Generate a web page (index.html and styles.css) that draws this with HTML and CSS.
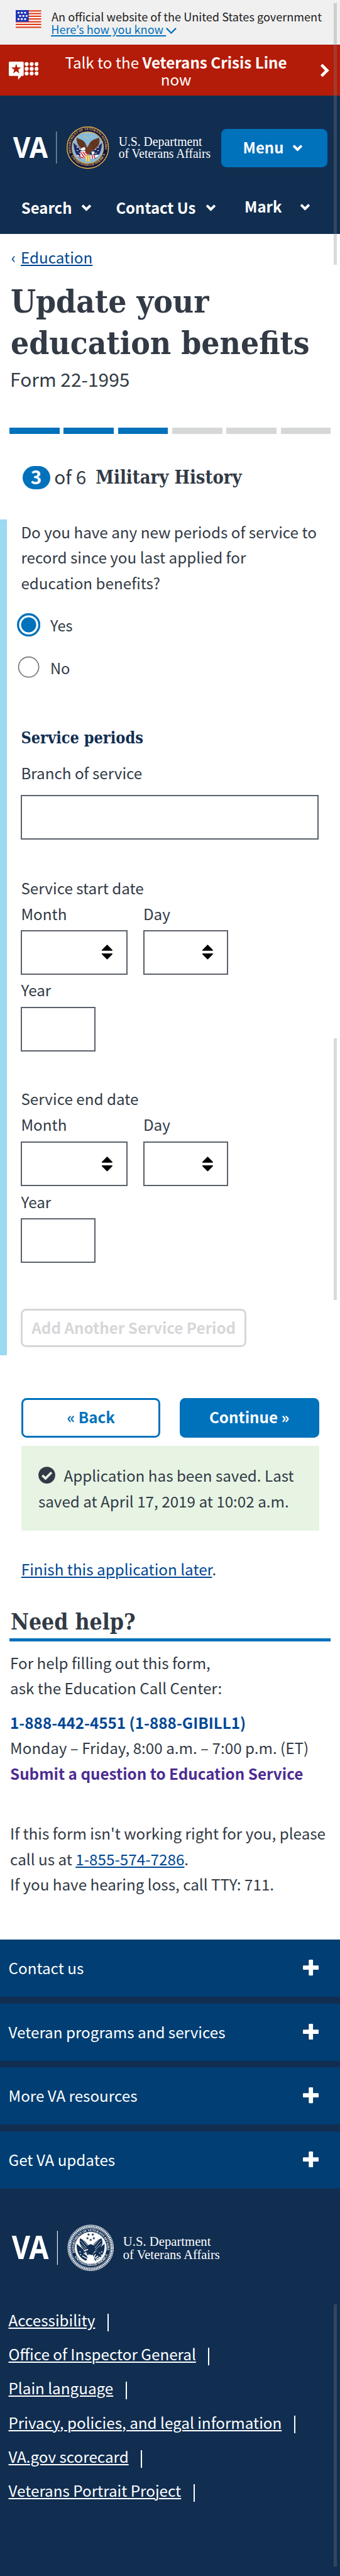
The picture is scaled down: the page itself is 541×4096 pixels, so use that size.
FILE: index.html
```
<!DOCTYPE html>
<html lang="en">
<head>
<meta charset="utf-8">
<title>Update your education benefits</title>
<link rel="stylesheet" href="styles.css">
</head>
<body>
<svg class="defs" aria-hidden="true">
  <symbol id="chev" viewBox="0 0 20 14"><path d="M2.4 3 10 10.6 17.6 3" fill="none" stroke="#fff" stroke-width="4.6"/></symbol>
  <symbol id="plus" viewBox="0 0 30 30"><rect x="11" width="8" height="30" rx="1.5" fill="#fff"/><rect y="11" width="30" height="8" rx="1.5" fill="#fff"/></symbol>
  <symbol id="sort" viewBox="0 0 20 28"><path d="M10 0 20 10V11.5H0V10zM0 16.500H20V18L10 28 0 18z"/></symbol>
  <symbol id="star" viewBox="-10 -10 20 20"><path d="M0-10 2.400-3.200 9.500-3.100 3.800 1.200 5.900 8.100 0 4-5.900 8.100-3.800 1.200-9.500-3.100-2.400-3.200z"/></symbol>
</svg>

<div class="gov">
  <svg class="flag" viewBox="0 0 48 34">
    <rect width="48" height="34" fill="#fff"/>
    <path d="M0 1.500H48M0 6.600H48M0 11.700H48M0 16.800H48M0 21.900H48M0 27H48M0 32.500H48" stroke="#dd4022" stroke-width="2.700"/>
    <rect width="24.500" height="22" fill="#2135b5"/>
    <path d="M3.500 5H20M6.500 11H22M3.500 17H20" stroke="#fff" stroke-width="3.200" stroke-dasharray="3.500 2.700"/>
  </svg>
  <div>An official website of the United States government<br><a>Here’s how you know </a><svg class="gov-chev" viewBox="0 0 20 12"><path d="M1 1 10 10 19 1" fill="none" stroke="#0071bb" stroke-width="2.700"/></svg></div>
</div>

<div class="crisis">
  <svg class="crisis-icon" viewBox="0 0 56 34">
    <path d="M2 0H26Q28 0 28 2V25Q28 27 26 27H24L17.500 34V27H2Q0 27 0 25V2Q0 0 2 0z" fill="#fff"/>
    <use href="#star" x="4" y="4" width="20" height="20" fill="#b31c08"/>
    <g fill="#fff"><circle cx="33.500" cy="4.500" r="3.700"/><circle cx="43" cy="4.500" r="3.700"/><circle cx="52.300" cy="4.500" r="3.700"/><circle cx="33.500" cy="13.500" r="3.700"/><circle cx="43" cy="13.500" r="3.700"/><circle cx="52.300" cy="13.500" r="3.700"/><circle cx="33.500" cy="22.300" r="3.700"/><circle cx="43" cy="22.300" r="3.700"/><circle cx="52.300" cy="22.300" r="3.700"/></g>
  </svg>
  <div class="crisis-text">Talk to the <b>Veterans Crisis Line</b> now</div>
  <svg class="crisis-arrow" viewBox="0 0 18 26"><path d="M3 2.500 13.500 13 3 23.500" fill="none" stroke="#fff" stroke-width="5.600"/></svg>
</div>

<header class="header">
  <div class="header-top">
    <svg class="logo" viewBox="20 236 380 82">
      <text class="va" x="24.500" y="296" textLength="65.500" lengthAdjust="spacingAndGlyphs">VA</text>
      <path d="M106 247V307" stroke="#8a99ad" stroke-width="1.600"/>
      <g transform="translate(165 277)">
        <circle r="40.500" fill="#17143f"/>
        <circle r="39" fill="none" stroke="#e3bb4e" stroke-width="1.700"/>
        <circle r="29.600" fill="#86b9dc" stroke="#d9b356" stroke-width="1.300"/>
        <path id="arcTop" d="M-29.500 13A32.500 32.500 0 1 1 29.500 13" fill="none"/>
        <path id="arcBot" d="M-33 12A35.500 35.500 0 0 0 33 12" fill="none"/>
        <text class="ring gold"><textPath href="#arcTop" startOffset="3" textLength="117">DEPARTMENT OF VETERANS AFFAIRS</textPath></text>
        <text class="ring gold"><textPath href="#arcBot" startOffset="4" textLength="80">UNITED STATES OF AMERICA</textPath></text>
        <path d="M-27-10C-26 6-22 15-14 21L-3 12-12 3zM27-10C26 6 22 15 14 21L3 12 12 3z" fill="#20285f"/>
        <path d="M-21-1l3 1M-21 5l3 1M-16 3l3 1M21-1l-3 1M21 5l-3 1M16 3l-3 1M-17 10l3 1M17 10l-3 1" stroke="#fff" stroke-width="1.200"/>
        <path d="M-28-11-13 4M28-11 13 4" stroke="#eee" stroke-width="1"/>
        <path d="M-21-19C-17-16-9-15-5-9L-1 0 4-9C8-15 16-16 21-19 25-9 20 0 8 6L3 13-4 11C-10 2-22-2-21-19z" fill="#6b3a22"/>
        <path d="M-19-14-7-3M-19-9-8 1M19-14 8-3M20-8 9 1M-14-15-5-6M14-15 6-6" stroke="#3a1c12" stroke-width="1"/>
        <path d="M-12 1-6-1-4 3-8 6-13 5z" fill="#fff"/><path d="M7 8 12 7 13 11 8 14z" fill="#fff"/>
        <path d="M-14 7-5 6 0 17-9 21C-15 19-19 18-21 13L-14 16zM14 14 21 13C19 18 13 21 6 21L5 14z" fill="#fff"/>
        <path d="M-13 9-6 19M-9 8-2 18M-17 16-8 20M8 14 9 21M12 14 13 20M-5 8 0 13" stroke="#cc2431" stroke-width="1.900"/>
        <path d="M-5 15-1 13 5 16 4 26-4 26z" fill="#e3b341"/><path d="M-2 16-3 25M2 16 2 26" stroke="#fff" stroke-width="1"/>
        <g fill="#ecd04f"><use href="#star" x="-5" y="-29" width="4" height="4"/><use href="#star" x="2" y="-29" width="4" height="4"/><use href="#star" x="-7" y="-23" width="4" height="4"/><use href="#star" x="4" y="-23" width="4" height="4"/><use href="#star" x="-2" y="-20" width="4" height="4"/></g>
      </g>
      <text class="dept" x="223" y="273.700" textLength="157" lengthAdjust="spacingAndGlyphs">U.S. Department</text>
      <text class="dept" x="223" y="296" textLength="173" lengthAdjust="spacingAndGlyphs">of Veterans Affairs</text>
    </svg>
    <div class="menu"><span>Menu</span><svg class="chev"><use href="#chev"/></svg></div>
  </div>
  <nav class="nav">
    <div class="n1"><span>Search</span><svg class="chev"><use href="#chev"/></svg></div>
    <div class="n2"><span>Contact Us</span><svg class="chev"><use href="#chev"/></svg></div>
    <div class="n3"><span>Mark</span><svg class="chev"><use href="#chev"/></svg></div>
  </nav>
</header>

<main>
  <div class="crumb"><span>‹</span><a>Education</a></div>
  <h1>Update your<br>education benefits</h1>
  <div class="form-no">Form 22-1995</div>
  <div class="progress"><i class="on"></i><i class="on"></i><i class="on"></i><i></i><i></i><i></i></div>
  <div class="step"><b class="pill">3</b><span class="of">of 6</span><h4>Military History</h4></div>

  <section class="fields">
    <p class="question">Do you have any new periods of service to<br>record since you last applied for<br>education benefits?</p>
    <div class="radio"><svg viewBox="0 0 44 44"><circle cx="22" cy="22" r="20" fill="#fff" stroke="#0071bb" stroke-width="4"/><circle cx="22" cy="22" r="14.200" fill="#0071bb"/></svg><span>Yes</span></div>
    <div class="radio"><svg viewBox="0 0 44 44"><circle cx="22" cy="22" r="19" fill="#fff" stroke="#757575" stroke-width="2"/></svg><span>No</span></div>
    <h5>Service periods</h5>
    <label>Branch of service</label>
    <div class="box branch"></div>

    <div class="date">
      <p>Service start date</p>
      <div class="pair">
        <div><label>Month</label><div class="box month"><svg class="sort"><use href="#sort"/></svg></div></div>
        <div><label>Day</label><div class="box day"><svg class="sort"><use href="#sort"/></svg></div></div>
      </div>
      <label class="year-label">Year</label><div class="box year"></div>
    </div>

    <div class="date end">
      <p>Service end date</p>
      <div class="pair">
        <div><label>Month</label><div class="box month"><svg class="sort"><use href="#sort"/></svg></div></div>
        <div><label>Day</label><div class="box day"><svg class="sort"><use href="#sort"/></svg></div></div>
      </div>
      <label class="year-label">Year</label><div class="box year"></div>
    </div>
    <div class="add">Add Another Service Period</div>
  </section>

  <div class="actions"><div class="btn back">« Back</div><div class="btn next">Continue »</div></div>
  <div class="saved"><svg class="check" viewBox="0 0 32 32"><circle cx="16" cy="16" r="15.800" fill="#323a45"/><path d="M7.500 16.500 13.500 22.300 24.800 11" fill="none" stroke="#e7f4e4" stroke-width="4.400"/></svg>Application has been saved. Last<br>saved at April 17, 2019 at 10:02 a.m.</div>
  <p class="finish"><a>Finish this application later</a>.</p>

  <section class="help">
    <h2>Need help?</h2>
    <p>For help filling out this form,<br>ask the Education Call Center:</p>
    <p class="contact"><b class="tel">1-888-442-4551 (1-888-GIBILL1)</b><br>Monday – Friday, 8:00 a.m. – 7:00 p.m. (ET)<br><b class="ask">Submit a question to Education Service</b></p>
    <p class="trouble">If this form isn't working right for you, please<br>call us at <a>1-855-574-7286</a>.<br>If you have hearing loss, call TTY: 711.</p>
  </section>
</main>

<footer>
  <div class="acc"><span>Contact us</span><svg><use href="#plus"/></svg></div>
  <div class="acc"><span>Veteran programs and services</span><svg><use href="#plus"/></svg></div>
  <div class="acc"><span>More VA resources</span><svg><use href="#plus"/></svg></div>
  <div class="acc"><span>Get VA updates</span><svg><use href="#plus"/></svg></div>
  <svg class="foot-logo" viewBox="16 4181 404 88">
    <text class="va big" x="21.500" y="4245.700" textLength="69.500" lengthAdjust="spacingAndGlyphs">VA</text>
    <path d="M107.500 4193V4257" stroke="#fff" stroke-width="1.300"/>
    <g transform="translate(170 4225)">
      <circle r="43" fill="none" stroke="#fff" stroke-width="1"/>
      <circle r="40" fill="none" stroke="#fff" stroke-width="3.600" stroke-dasharray="2.200 1"/>
      <circle r="37.300" fill="none" stroke="#fff" stroke-width=".7"/>
      <path id="arcTop2" d="M-28.500 12A31 31 0 1 1 28.500 12" fill="none"/>
      <path id="arcBot2" d="M-32.500 12A35 35 0 0 0 32.500 12" fill="none"/>
      <text class="ring white"><textPath href="#arcTop2" startOffset="3" textLength="111">DEPARTMENT OF VETERANS AFFAIRS</textPath></text>
      <text class="ring white"><textPath href="#arcBot2" startOffset="5" textLength="77">UNITED STATES OF AMERICA</textPath></text>
      <circle r="30" fill="#fff"/>
      <path d="M-26-8C-28 10-18 22-8 24L-4 12zM26-8C28 10 18 22 8 24L4 12z" fill="#112e51"/>
      <path d="M-26-10-10 4M26-10 10 4" stroke="#fff" stroke-width="3.500"/>
      <path d="M-20-18C-12-14-8-12-5-5L0-7 5-5C8-12 12-14 20-18 26-8 19 3 7 7L3 14-4 12C-10 4-24-2-20-18z" fill="#112e51"/>
      <path d="M-19-13-8 0M-15-15-6-4M-20-7-8 4M19-13 8 0M15-15 6-4M20-7 8 4M-12-14-6-7M12-14 6-7" stroke="#fff" stroke-width=".9"/>
      <path d="M-13 6-5 3M-13 10-4 16M-16 15-7 20M-10 8-3 22M-21 7l2 1M-20 12l2 1M20 7l2 1M16 9l2 1M19 13l2 1M9 12 5 21M14 15 8 20M18 17 10 22M0 16V26M-3 17-4 25M4 17 4 24" stroke="#fff" stroke-width="1.800"/>
      <g fill="#112e51"><use href="#star" x="-7" y="-28" width="6" height="6"/><use href="#star" x="1" y="-28" width="6" height="6"/><use href="#star" x="-9" y="-21" width="6" height="6"/><use href="#star" x="3" y="-21" width="6" height="6"/><use href="#star" x="-3" y="-18" width="6" height="6"/></g>
    </g>
    <text class="dept big" x="231" y="4221.500" textLength="165" lengthAdjust="spacingAndGlyphs">U.S. Department</text>
    <text class="dept big" x="231" y="4245.600" textLength="182" lengthAdjust="spacingAndGlyphs">of Veterans Affairs</text>
  </svg>
  <ul>
    <li><a>Accessibility</a></li>
    <li><a>Office of Inspector General</a></li>
    <li><a>Plain language</a></li>
    <li><a>Privacy, policies, and legal information</a></li>
    <li><a>VA.gov scorecard</a></li>
    <li><a>Veterans Portrait Project</a></li>
  </ul>
</footer>
<i class="bar bar1"></i><i class="bar bar2"></i><i class="bar bar3"></i>
</body>
</html>
```
FILE: styles.css
```
html { font-size: 8.459px; }
* { box-sizing: border-box; }
body {
  margin: 0; position: relative; height: 4096px; overflow: hidden; background: #fff; color: #323a45;
  font: 2.865rem/4.8rem "Noto Sans CJK KR", "Noto Sans", sans-serif;
}
h1, h2, h4, h5, p, ul { margin: 0; padding: 0; }
h1, h2, h4, h5 { font-family: "DejaVu Serif Condensed", "DejaVu Serif", serif; font-stretch: condensed; font-weight: 700; }
svg { display: block; flex: none; }
.defs { position: absolute; width: 0; height: 0; }
a { color: #004795; text-decoration: underline; text-decoration-thickness: 2px; text-underline-offset: 2px; }
label { display: block; }

.gov { display: flex; height: 8.4rem; padding: 1.9rem 0 0 3rem; background: #f0f0f0; color: #212121; font-size: 2.145rem; line-height: 2.4rem; white-space: nowrap; }
.flag { width: 4.8rem; height: 3.4rem; margin: .05rem 1.9rem 0 0; }
.gov a { color: #0071bb; text-underline-offset: 1.5px; white-space: pre; }
.gov div > a { margin-left: -.1rem; }
.gov-chev { display: inline-block; width: 2rem; height: 1.2rem; }

.crisis { display: flex; height: 9.6rem; background: #b31c08; color: #fff; }
.crisis-icon { width: 5.6rem; height: 3.4rem; margin: 3.2rem 0 0 1.6rem; }
.crisis-text { width: 51.8rem; padding: 1.6rem 3rem 0; text-align: center; font-size: 2.855rem; line-height: 3.2rem; }
.crisis-arrow { width: 1.8rem; height: 2.6rem; margin: 3.6rem 0 0 1.2rem; }

.header { height: 26rem; padding-top: 5.6rem; background: #112e51; color: #fff; font-weight: 700; font-size: 2.83rem; line-height: 4rem; }
.header-top { display: flex; padding-left: 2rem; }
.logo { width: 38rem; height: 8.2rem; }
.va { font: 700 56px "Noto Sans", sans-serif; fill: #fff; }
.va.big { font-size: 61.500px; }
.dept { font: 400 24px "Liberation Serif", serif; fill: #fff; }
.dept.big { font-size: 25px; }
.ring { font: 700 6.200px "Liberation Serif", serif; }
.gold { fill: #e0bf5c; }
.white { fill: #fff; }
.menu { display: flex; justify-content: space-between; width: 20rem; height: 7.2rem; margin: .6rem 0 0 1.6rem; padding: 1.5rem 4.6rem 0 4.1rem; border-radius: 1rem; background: #0071bb; }
.chev { width: 2rem; height: 1.4rem; margin-top: 1.35rem; }
.nav { display: flex; padding: 5.2rem 0 0 4rem; }
.nav div { display: flex; justify-content: space-between; }
.n1 { width: 13.2rem; margin-right: 4.6rem; }
.n2 { width: 18.8rem; margin-right: 5.4rem; }
.nav .n3 { width: 12.4rem; margin-top: -.2rem; }

main { height: 320.6rem; padding: 1.95rem 1.8rem 0; }
.crumb { display: flex; gap: .6rem; padding-left: .3rem; color: #004795; }
.crumb span { width: .8rem; flex: none; }
.crumb a { margin-left: .4rem; }
h1 { margin: 2.05rem 0 0 .2rem; font-size: 6.04rem; line-height: 7.8rem; white-space: nowrap; }
.form-no { margin: .46rem 0 0 .1rem; font-size: 3.54rem; }
.progress { display: grid; grid-template-columns: repeat(6, 9.4rem); gap: .8rem; margin-top: 6.76rem; }
.progress i { height: 1.2rem; background: #d6d7d9; }
.progress .on { background: #0071bb; }
.step { display: flex; height: 4.4rem; margin: 6rem 0 0 2.4rem; font-size: 3.52rem; line-height: 3.8rem; }
.pill { width: 5.2rem; border-radius: 2.2rem; background: #0071bb; color: #fff; text-align: center; }
.of { width: 6.8rem; margin: 0 1rem 0 .8rem; white-space: nowrap; }
.step h4 { font-size: 3.42rem; line-height: 4.4rem; white-space: nowrap; }

.fields { height: 157.150rem; margin: 5.6rem 0 0 -1.8rem; padding-left: 2.65rem; border-left: 1.4rem solid #9bdaf1; }
.question { margin-bottom: 1.4rem; white-space: nowrap; }
.radio { display: flex; align-items: center; height: 8rem; margin-left: -.8rem; }
.radio svg { width: 4.4rem; height: 4.4rem; }
.radio span { padding: .3rem 0 0 1.9rem; font-size: 2.8rem; }
h5 { margin: 6.87rem 0 1.88rem; color: #112e51; font-size: 2.97rem; line-height: 4.8rem; }
.box { height: 8.4rem; border: 2px solid #5b616b; background: #fff; }
.branch { width: 56rem; margin: 1.65rem 0 6.75rem; }
.pair { display: flex; gap: 3rem; }
.pair .box { display: flex; align-items: center; justify-content: flex-end; margin-top: .65rem; padding-right: 2.6rem; }
.month { width: 20rem; }
.day { width: 16rem; }
.sort { width: 2rem; height: 2.8rem; }
.year-label { margin: .55rem 0 .65rem; }
.year { width: 14rem; }
.date.end { margin-top: 6.55rem; }
.end .pair .box { margin-top: .85rem; }
.add { width: 42.4rem; height: 7.2rem; margin-top: 8.6rem; border: .4rem solid #d6d7d9; border-radius: 1rem; color: #d6d7d9; font-weight: 700; line-height: 6.4rem; text-align: center; }

.actions { display: flex; gap: 3.6rem; margin: 8.05rem 0 1.6rem 2.2rem; }
.btn { width: 26.2rem; height: 7.4rem; border: .4rem solid #0071bb; border-radius: 1rem; color: #0071bb; font-weight: 700; line-height: 6.5rem; text-align: center; }
.next { background: #0071bb; color: #fff; }
.saved { width: 56rem; height: 15.950rem; margin-left: 2.2rem; padding: 3.2rem 0 0 3.2rem; background: #e7f4e4; white-space: nowrap; }
.check { display: inline-block; width: 3.2rem; height: 3.2rem; margin-right: 1.6rem; vertical-align: -.35rem; }
.finish { margin: 4.85rem 0 0 2.2rem; }
h2 { margin-top: 5.12rem; padding: 0 0 .68rem .2rem; border-bottom: .6rem solid #0071bb; font-size: 4.17rem; line-height: 4.8rem; }
.help p { margin: 1.57rem 0 0 .1rem; white-space: nowrap; }
.help .contact { margin-top: 1.65rem; }
.help .trouble { margin-top: 6.45rem; }
.tel { color: #004795; }
.ask { color: #4c2c92; }

footer { height: 119.800rem; background: #112e51; color: #fff; }
.acc { display: flex; align-items: center; justify-content: space-between; height: 10.8rem; margin-bottom: 1.2rem; padding: 0 4rem 0 1.6rem; background: #003e73; }
.acc:nth-of-type(4) { margin-bottom: 0; }
.acc svg { width: 3rem; height: 3rem; margin-top: -.2rem; }
.foot-logo { width: 40.4rem; height: 8.8rem; margin: 6.7rem 0 6.05rem 1.6rem; }
footer ul { list-style: none; padding-left: 1.6rem; line-height: 6.4rem; }
footer li { display: flex; align-items: center; height: 6.4rem; }
footer a { color: #fff; }
footer li::after { content: ""; width: 2px; height: 3.3rem; margin: .9rem 0 0 2.3rem; background: #fff; }

.bar { position: absolute; left: 62.800rem; width: .6rem; background: rgba(128, 128, 128, .3); }
.bar1 { top: .6rem; height: 49.200rem; }
.bar2 { top: 195.200rem; height: 49.200rem; }
.bar3 { top: 433.200rem; height: 49.200rem; }
```
